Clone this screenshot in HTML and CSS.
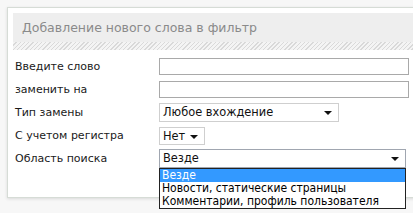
FILE: index.html
```html
<!DOCTYPE html>
<html lang="ru">
<head>
    <meta charset="UTF-8">
    <title>Добавление нового слова в фильтр</title>
    <link rel="stylesheet" href="styles.css">
</head>
<body>
    <div class="panel">
        <div class="panel-head">Добавление нового слова в фильтр</div>
        <div class="hatch"></div>
        <div class="form">
            <div class="row">
                <span class="label">Введите слово</span>
                <div class="input"></div>
            </div>
            <div class="row">
                <span class="label">заменить на</span>
                <div class="input"></div>
            </div>
            <div class="row">
                <span class="label">Тип замены</span>
                <div class="select select-type">Любое вхождение<span class="arrow"></span></div>
            </div>
            <div class="row">
                <span class="label">С учетом регистра</span>
                <div class="select select-case">Нет<span class="arrow"></span></div>
            </div>
            <div class="row">
                <span class="label">Область поиска</span>
                <div class="select select-area">Везде<span class="arrow"></span>
                    <ul class="dropdown">
                        <li class="active">Везде</li>
                        <li>Новости, статические страницы</li>
                        <li>Комментарии, профиль пользователя</li>
                    </ul>
                </div>
            </div>
        </div>
    </div>
</body>
</html>
```

FILE: styles.css
```css
* {
    box-sizing: border-box;
    margin: 0;
    padding: 0;
}

html {
    overflow: hidden;
    background-color: #f7f7f7;
}

body {
    font-family: "DejaVu Sans", Verdana, sans-serif;
    font-size: 11px;
    color: #222;
    background-color: #f7f7f7;
    min-height: 213px;
    padding: 7px 0 0 7px;
}

.panel {
    background: #fff;
    border: 1px solid #d6dcd6;
    border-right: none;
    box-shadow: 0 1px 3px rgba(0,0,0,0.12);
    height: 191px;
    margin-right: -10px;
    padding: 5px 0 0 5px;
}

.panel-head {
    background-color: #eeeeee;
    height: 29px;
    line-height: 29px;
    padding-left: 9px;
    color: #8a8a8a;
    font-size: 12.5px;
}

.hatch {
    height: 8px;
    background: repeating-linear-gradient(135deg, #f4f4f4 0, #f4f4f4 2px, #d9d9d9 2px, #d9d9d9 3px);
}

.form {
    padding-top: 5px;
    padding-left: 2px;
}

.row {
    display: flex;
    align-items: center;
    height: 23px;
}

.label {
    width: 144px;
    color: #1a1a1a;
}

.input {
    width: 250px;
    height: 17px;
    border: 1px solid #a9a9a9;
    background: #fff;
}

.select {
    position: relative;
    height: 19px;
    line-height: 17px;
    border: 1px solid #cfcfcf;
    background: #fff;
    padding-left: 3px;
    font-size: 11.4px;
    color: #111;
}

.select-type {
    width: 180px;
}

.select-case {
    width: 46px;
    height: 18px;
}

.select-area {
    width: 247px;
    border-color: #a0a6b0;
}

.arrow {
    position: absolute;
    right: 6px;
    top: 7px;
    border-left: 4px solid transparent;
    border-right: 4px solid transparent;
    border-top: 4px solid #111;
}

.dropdown {
    position: absolute;
    top: 18px;
    left: -1px;
    width: 247px;
    list-style: none;
    background: #fff;
    border: 1px solid #222;
    z-index: 2;
}

.dropdown li {
    height: 13px;
    line-height: 13px;
    padding-left: 2px;
    font-family: "DejaVu Sans Condensed", "DejaVu Sans", sans-serif;
    font-stretch: condensed;
    font-size: 12px;
    color: #000;
    white-space: nowrap;
}

.dropdown li.active {
    background-color: #3399ff;
    color: #fff;
}
```
